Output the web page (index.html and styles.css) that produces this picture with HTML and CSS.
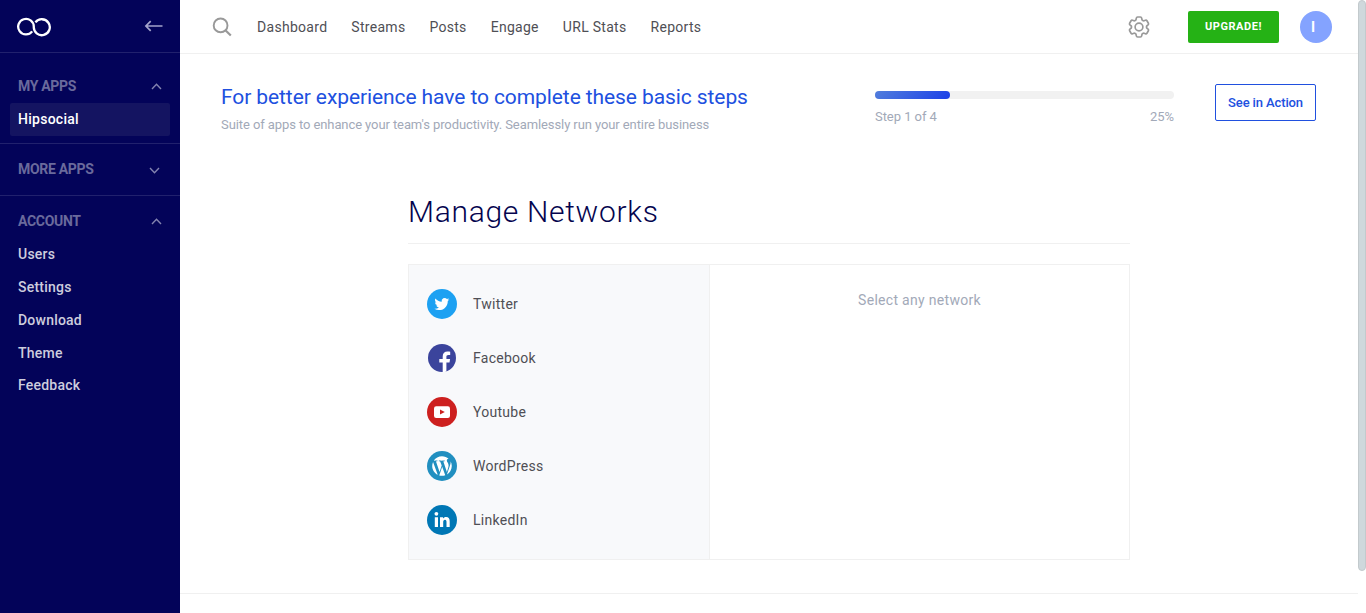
FILE: index.html
```html
<!DOCTYPE html>
<html lang="en">
<head>
<meta charset="utf-8">
<title>Hipsocial</title>
<link rel="stylesheet" href="styles.css">
</head>
<body>
<div class="app">
  <aside class="sidebar">
    <div class="side-head">
      <svg class="logo" width="36" height="20" viewBox="0 0 36 20"><path fill="none" stroke="#fff" stroke-width="2.3" d="M16.2 14.4A7.8 7.8 0 1 1 17.8 9.7A8 8 0 1 0 19.4 5.4"/></svg>
      <svg class="back" width="19" height="12" viewBox="0 0 19 12"><path d="M18.5 6H2M6.7 1.2L1.9 6L6.7 10.8" fill="none" stroke="#a4a4cb" stroke-width="1.7"/></svg>
    </div>
    <section class="group group-apps">
      <h2 class="group-title"><span>MY APPS</span><svg width="11" height="7" viewBox="0 0 11 7"><path d="M1 6L5.5 1.3L10 6"/></svg></h2>
      <a class="side-item active">Hipsocial</a>
    </section>
    <section class="group group-more">
      <h2 class="group-title"><span>MORE APPS</span><svg class="down" width="11" height="7" viewBox="0 0 11 7"><path d="M1 1L5.5 5.7L10 1"/></svg></h2>
    </section>
    <section class="group group-account">
      <h2 class="group-title"><span>ACCOUNT</span><svg width="11" height="7" viewBox="0 0 11 7"><path d="M1 6L5.5 1.3L10 6"/></svg></h2>
      <a class="side-item">Users</a>
      <a class="side-item">Settings</a>
      <a class="side-item">Download</a>
      <a class="side-item">Theme</a>
      <a class="side-item">Feedback</a>
    </section>
  </aside>
  <main class="main">
    <header class="topbar">
      <svg class="search" width="20" height="20" viewBox="0 0 20 20"><g fill="none" stroke="#999" stroke-width="1.9"><circle cx="8.6" cy="8.4" r="6.9"/><path d="M13.4 13.2L18.8 18.5" stroke-width="2.2"/></g></svg>
      <nav class="nav"><a>Dashboard</a><a>Streams</a><a>Posts</a><a>Engage</a><a>URL Stats</a><a>Reports</a></nav>
      <svg class="gear" width="22" height="22" viewBox="2.1 2.1 19.8 19.8"><g fill="none" stroke="#999" stroke-width="1.5" stroke-linejoin="round"><path d="M9.594 3.94c.09-.542.56-.94 1.11-.94h2.593c.55 0 1.02.398 1.11.94l.213 1.281c.063.374.313.686.645.87.074.04.147.083.22.127.324.196.72.257 1.075.124l1.217-.456a1.125 1.125 0 0 1 1.37.49l1.296 2.247a1.125 1.125 0 0 1-.26 1.431l-1.003.827c-.293.24-.438.613-.431.992a6.759 6.759 0 0 1 0 .255c-.007.378.138.75.43.99l1.005.828c.424.35.534.954.26 1.43l-1.298 2.247a1.125 1.125 0 0 1-1.369.491l-1.217-.456c-.355-.133-.75-.072-1.076.124a6.57 6.57 0 0 1-.22.128c-.331.183-.581.495-.644.869l-.213 1.28c-.09.543-.56.941-1.11.941h-2.594c-.55 0-1.02-.398-1.11-.94l-.213-1.281c-.062-.374-.312-.686-.644-.87a6.52 6.52 0 0 1-.22-.127c-.325-.196-.72-.257-1.076-.124l-1.217.456a1.125 1.125 0 0 1-1.369-.49l-1.297-2.247a1.125 1.125 0 0 1 .26-1.431l1.004-.827c.292-.24.437-.613.43-.992a6.932 6.932 0 0 1 0-.255c.007-.378-.138-.75-.43-.99l-1.004-.828a1.125 1.125 0 0 1-.26-1.43l1.297-2.247a1.125 1.125 0 0 1 1.37-.491l1.216.456c.356.133.751.072 1.076-.124.072-.044.146-.087.22-.128.332-.183.582-.495.644-.869l.214-1.281Z"/><circle cx="12" cy="12" r="3.5"/></g></svg>
      <button class="upgrade">UPGRADE!</button>
      <span class="avatar">I</span>
    </header>
    <section class="steps">
      <div class="steps-text">
        <h1 class="steps-title">For better experience have to complete these basic steps</h1>
        <p class="steps-sub">Suite of apps to enhance your team's productivity. Seamlessly run your entire business</p>
      </div>
      <div class="progress">
        <div class="track"><div class="fill" style="width:25%"></div></div>
        <div class="progress-labels"><span>Step 1 of 4</span><span>25%</span></div>
      </div>
      <button class="action">See in Action</button>
    </section>
    <section class="networks">
      <h2 class="networks-title">Manage Networks</h2>
      <div class="panel">
        <ul class="network-list">
          <li class="network"><svg width="30" height="30" viewBox="0 0 30 30"><circle cx="15" cy="15" r="15" fill="#1da1f2"/><path transform="translate(7.4 7.6) scale(.62)" fill="#fff" d="M23.953 4.57a10 10 0 01-2.825.775 4.958 4.958 0 002.163-2.723c-.951.555-2.005.959-3.127 1.184a4.92 4.92 0 00-8.384 4.482C7.69 8.095 4.067 6.13 1.64 3.162a4.822 4.822 0 00-.666 2.475c0 1.71.87 3.213 2.188 4.096a4.904 4.904 0 01-2.228-.616v.06a4.923 4.923 0 003.946 4.827 4.996 4.996 0 01-2.212.085 4.936 4.936 0 004.604 3.417 9.867 9.867 0 01-6.102 2.105c-.39 0-.779-.023-1.17-.067a13.995 13.995 0 007.557 2.209c9.053 0 13.998-7.496 13.998-13.985 0-.21 0-.42-.015-.63A9.935 9.935 0 0024 4.59z"/></svg><span>Twitter</span></li>
          <li class="network"><svg width="30" height="30" viewBox="0 0 30 30"><circle cx="15" cy="15" r="14" fill="#3b449c"/><path fill="#fff" d="M15.7 29.2V19.6H12.3V16H15.7V13.5C15.7 10.4 17.6 8.6 20.5 8.6C21.8 8.6 23.2 8.8 23.2 8.8V11.9H21.4C19.9 11.9 19.4 12.7 19.4 13.6V16H23.1L22.5 19.6H19.4V28.4A14 14 0 0 1 15.7 29.2Z"/></svg><span>Facebook</span></li>
          <li class="network"><svg width="30" height="30" viewBox="0 0 30 30"><circle cx="15" cy="15" r="15" fill="#cd201f"/><rect x="7" y="9.2" width="16" height="11.8" rx="2.2" fill="#fff"/><path fill="#cd201f" d="M13 12.4L17.8 15L13 17.6Z"/></svg><span>Youtube</span></li>
          <li class="network"><svg width="30" height="30" viewBox="0 0 30 30"><circle cx="15" cy="15" r="15" fill="#218fc0"/><path transform="translate(3.22 3.22) scale(.046)" fill="#fff" d="M61.7 169.4l101.5 278C92.2 413 43.3 340.2 43.3 256c0-30.9 6.6-60.1 18.4-86.6zm337.9 75.9c0-26.3-9.4-44.5-17.5-58.7-10.8-17.5-20.9-32.4-20.9-49.9 0-19.6 14.8-37.8 35.7-37.8.9 0 1.8.1 2.8.2-37.9-34.7-88.3-55.9-143.7-55.9-74.3 0-139.7 38.1-177.8 95.9 5 .2 9.7.3 13.7.3 22.2 0 56.7-2.7 56.7-2.7 11.5-.7 12.8 16.2 1.4 17.5 0 0-11.5 1.3-24.3 2l77.5 230.4L249.8 247l-33.1-90.8c-11.5-.7-22.3-2-22.3-2-11.5-.7-10.1-18.2 1.3-17.5 0 0 35.1 2.7 56 2.7 22.2 0 56.7-2.7 56.7-2.7 11.5-.7 12.8 16.2 1.4 17.5 0 0-11.5 1.3-24.3 2l76.9 228.7 21.2-70.9c9-29.4 16-50.5 16-68.7zm-139.9 29.3l-63.8 185.5c19.1 5.6 39.2 8.7 60.1 8.7 24.8 0 48.5-4.3 70.6-12.1-.6-.9-1.1-1.9-1.5-2.9l-65.4-179.2zm183-120.7c.9 6.8 1.4 14 1.4 21.9 0 21.6-4 45.8-16.2 76.2l-65 187.9C426.2 403 468.7 334.5 468.7 256c0-37-9.4-71.8-26-102.1z"/></svg><span>WordPress</span></li>
          <li class="network"><svg width="30" height="30" viewBox="0 0 30 30"><circle cx="15" cy="15" r="15" fill="#0077b5"/><g fill="#fff"><circle cx="9.4" cy="8.8" r="1.9"/><path d="M7.8 12.2H11V22H7.8ZM13 12.2H16V13.6C16.6 12.6 17.7 12 19.1 12C21.8 12 22.7 13.8 22.7 16.4V22H19.5V17C19.5 15.7 19.2 14.7 18 14.7C16.7 14.7 16.2 15.7 16.2 17V22H13Z"/></g></svg><span>LinkedIn</span></li>
        </ul>
        <div class="panel-empty">Select any network</div>
      </div>
    </section>
    <footer class="footer"></footer>
  </main>
  <div class="scroll"><div class="thumb"></div></div>
</div>
</body>
</html>
```

FILE: styles.css
```css
* { box-sizing: border-box; }
body { margin: 0; font-family: Roboto, sans-serif; background: #fff; overflow: hidden; }
h1, h2, p, ul { margin: 0; padding: 0; font-weight: 400; }
button { font-family: inherit; padding: 0; border: 0; }
svg { flex: none; display: block; }

.app { display: flex; height: 613px; }

/* Sidebar */
.sidebar { width: 180px; flex: none; background: #030359; }
.side-head { height: 53px; display: flex; justify-content: space-between; align-items: flex-start; padding: 17px 17px 0 16px; border-bottom: 1px solid #21216d; }
.back { margin-top: 2.5px; }
.group { padding: 0 10px; }
.group-title { display: flex; justify-content: space-between; align-items: center; height: 34px; padding: 0 8px; font-size: 14px; font-weight: 700; letter-spacing: -.32px; color: #6a6a9c; }
.group-title path { fill: none; stroke: #8484b0; stroke-width: 1.4; }
.group-title .down { margin-right: 2px; margin-top: 2px; }
.group-apps { height: 91px; padding-top: 16px; border-bottom: 1px solid #21216d; }
.group-more { height: 52px; padding-top: 8px; border-bottom: 1px solid #21216d; }
.group-account { padding-top: 8px; }
.side-item { display: flex; align-items: center; height: 33px; padding: 0 8px 1.5px; font-size: 14px; font-weight: 500; letter-spacing: .22px; color: #cdcdde; border-radius: 2px; }
.group-account .side-item:last-child { height: 31px; }
.side-item.active { background: #141461; color: #fff; letter-spacing: .27px; }

/* Top bar */
.main { flex: 1; min-width: 0; }
.topbar { height: 54px; display: flex; align-items: center; padding: 0 26px 0 32px; border-bottom: 1px solid #f0f0f0; }
.nav { display: flex; gap: 24px; margin-left: 25px; font-size: 14px; letter-spacing: .29px; color: #4f4f55; }
.gear { margin-left: auto; }
.upgrade { width: 91px; height: 32px; margin-left: 38px; border-radius: 2px; background: #25b215; color: #fff; font-size: 11px; font-weight: 700; letter-spacing: .55px; }
.avatar { width: 32px; height: 32px; margin-left: 21px; padding-right: 6px; border-radius: 50%; background: #84a3ff; color: #fff; font-size: 14px; font-weight: 700; display: flex; align-items: center; justify-content: center; }

/* Onboarding steps */
.steps { display: flex; height: 130px; padding: 30px 42px 0 41px; }
.steps-text { width: 654px; }
.steps-title { font-size: 21px; line-height: 26px; letter-spacing: -.09px; color: #2050df; }
.steps-sub { margin-top: 6px; font-size: 13px; line-height: 17px; letter-spacing: -.09px; color: #a2a9b8; }
.progress { width: 299px; padding-top: 7px; }
.track { height: 8px; border-radius: 4px; background: #f1f1f1; }
.fill { height: 8px; border-radius: 4px; background: linear-gradient(135deg, #527edc, #1b40e8); }
.progress-labels { display: flex; justify-content: space-between; margin-top: 9px; font-size: 13px; line-height: 17px; letter-spacing: -.05px; color: #a2a9b8; }
.action { width: 101px; height: 37px; margin-left: 41px; border: 1px solid #2050df; border-radius: 2px; background: #fff; color: #2050df; font-size: 13px; font-weight: 500; letter-spacing: -.12px; }

/* Networks */
.networks { width: 722px; margin-left: 228px; }
.networks-title { height: 60px; padding-top: 8px; border-bottom: 1px solid #f0f0f0; font-size: 30px; line-height: 40px; font-weight: 300; letter-spacing: .7px; color: #04044e; }
.panel { display: flex; height: 296px; margin-top: 20px; border: 1px solid #f0f0f0; }
.network-list { width: 301px; padding: 12px 18px; list-style: none; background: #f8f9fb; border-right: 1px solid #f0f0f0; }
.network { display: flex; align-items: center; height: 54px; gap: 16px; font-size: 14px; letter-spacing: .27px; color: #4f4f55; }
.panel-empty { flex: 1; padding-top: 26px; text-align: center; font-size: 14px; line-height: 18px; letter-spacing: .3px; color: #a2a9b8; }
.footer { margin-top: 33px; border-top: 1px solid #f0f0f0; }

.scroll { width: 8px; }
.thumb { height: 571px; border: 1px solid #c3cacd; border-radius: 4px; background: #cfd8dc; }
```
